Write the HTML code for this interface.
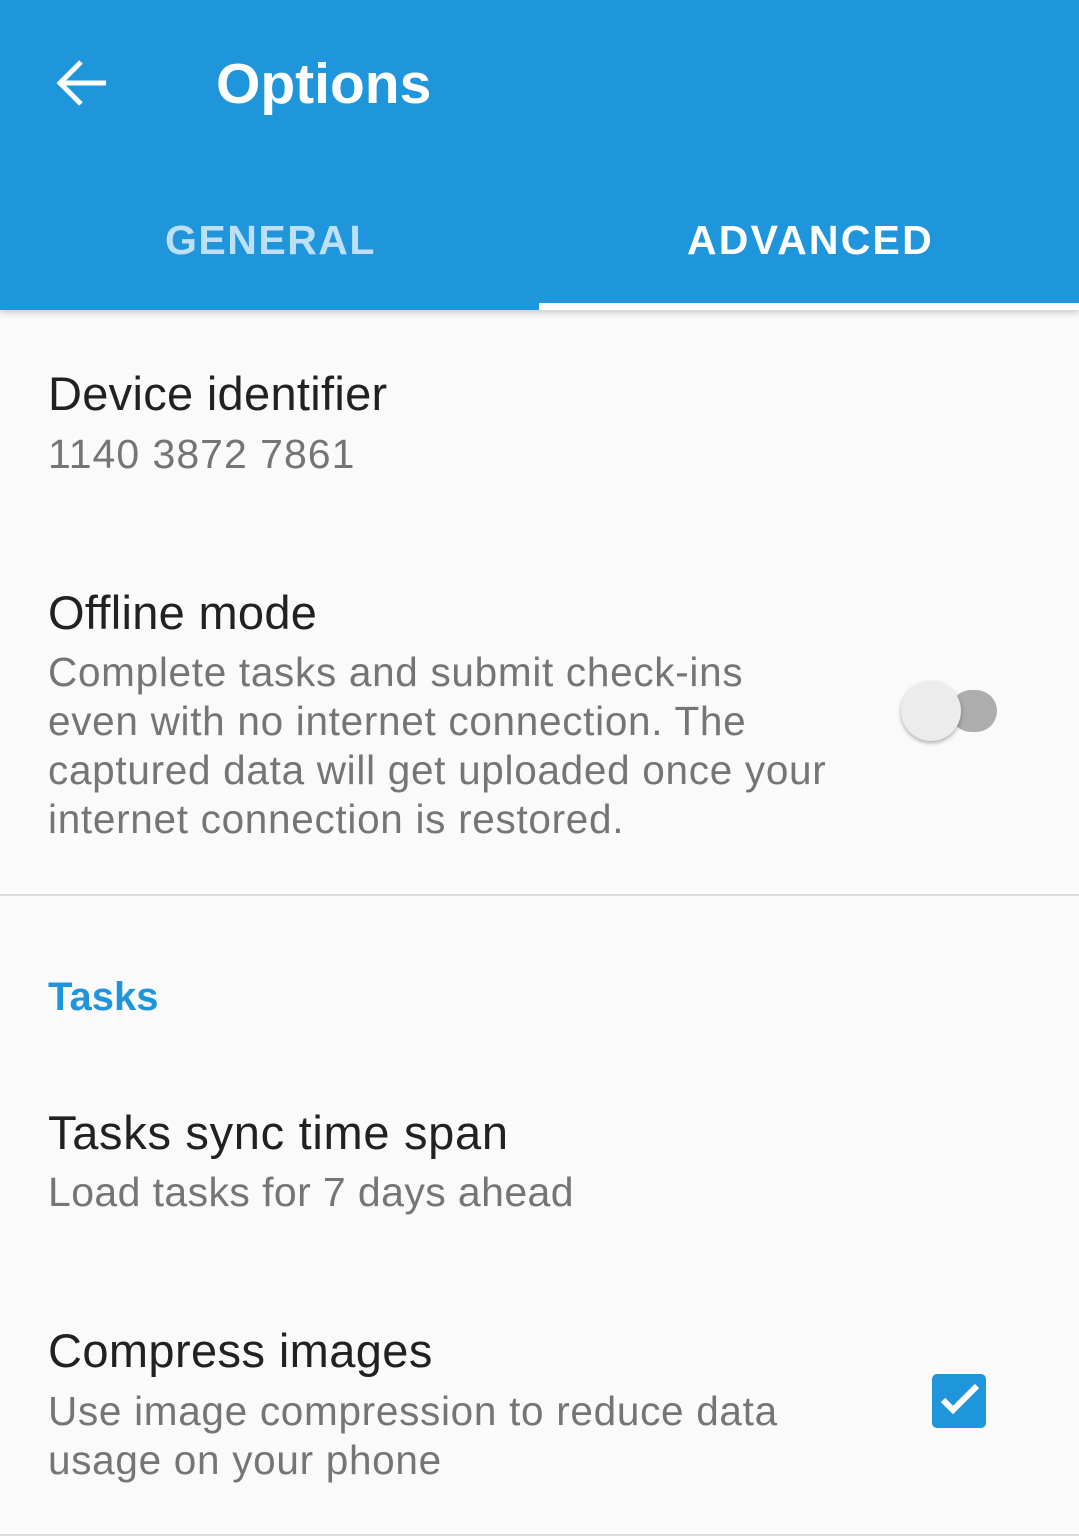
<!DOCTYPE html>
<html><head><style>
*{margin:0;padding:0;box-sizing:border-box}
body{width:1079px;height:1536px;background:#fafafa;font-family:"Liberation Sans",sans-serif;position:relative;overflow:hidden}
.hdr{position:absolute;left:0;top:0;width:1079px;height:310px;background:#1f96db;box-shadow:0 3px 6px rgba(0,0,0,.18)}
.t{position:absolute;white-space:nowrap}
</style></head><body>
<div class="hdr">
<svg style="position:absolute;left:56px;top:58px" width="52" height="50" viewBox="0 0 52 50"><path d="M50 25H6M25 4L4 25L25 46" stroke="#fff" stroke-width="5" fill="none"/></svg>
<div class="t" style="left:216px;top:51px;font-size:57px;color:#fff;font-weight:bold">Options</div>
<div class="t" style="left:165px;top:217px;font-size:41px;color:#bde0f7;letter-spacing:1.5px;font-weight:bold">GENERAL</div>
<div class="t" style="left:687px;top:217px;font-size:41px;color:#fff;letter-spacing:2.2px;font-weight:bold">ADVANCED</div>
<div style="position:absolute;left:539px;top:303px;width:540px;height:7px;background:#fff"></div>
</div>
<div class="t" style="left:48px;top:366px;font-size:47px;color:#212121;letter-spacing:0.3px">Device identifier</div>
<div class="t" style="left:48px;top:431px;font-size:41px;color:#757575;letter-spacing:1px">1140 3872 7861</div>
<div class="t" style="left:48px;top:585px;font-size:47px;color:#212121;letter-spacing:0.3px">Offline mode</div>
<div class="t" style="left:48px;top:648px;font-size:40.5px;line-height:49px;color:#757575;letter-spacing:0.7px">Complete tasks and submit check-ins<br>even with no internet connection. The<br>captured data will get uploaded once your<br>internet connection is restored.</div>
<div style="position:absolute;left:950px;top:690px;width:47px;height:42px;border-radius:21px;background:#adadad"></div>
<div style="position:absolute;left:901px;top:681px;width:60px;height:60px;border-radius:50%;background:#ececec;box-shadow:0 2px 4px rgba(0,0,0,.3)"></div>
<div style="position:absolute;left:0;top:894px;width:1079px;height:2px;background:#dcdcdc"></div>
<div class="t" style="left:48px;top:975px;font-size:40px;color:#1f96db;font-weight:bold">Tasks</div>
<div class="t" style="left:48px;top:1105px;font-size:47px;color:#212121;letter-spacing:0.7px">Tasks sync time span</div>
<div class="t" style="left:48px;top:1169px;font-size:41px;color:#757575;letter-spacing:0.4px">Load tasks for 7 days ahead</div>
<div class="t" style="left:48px;top:1323px;font-size:47px;color:#212121;letter-spacing:0.4px">Compress images</div>
<div class="t" style="left:48px;top:1387px;font-size:40.5px;line-height:49px;color:#757575;letter-spacing:0.7px">Use image compression to reduce data<br>usage on your phone</div>
<div style="position:absolute;left:932px;top:1374px;width:54px;height:54px;border-radius:5px;background:#1f96db"></div>
<svg style="position:absolute;left:932px;top:1374px" width="54" height="54" viewBox="0 0 54 54"><path d="M11 26L21 36L45 12" stroke="#fff" stroke-width="6" fill="none"/></svg>
<div style="position:absolute;left:0;top:1534px;width:1079px;height:2px;background:#dcdcdc"></div>
</body></html>
